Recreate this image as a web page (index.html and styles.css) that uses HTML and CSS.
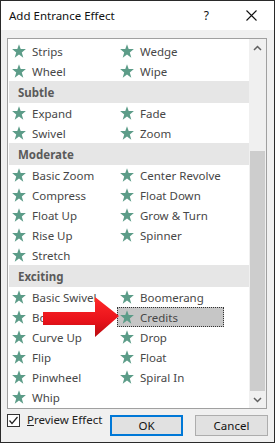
FILE: index.html
```html
<!DOCTYPE html>
<html>
<head>
<meta charset="utf-8">
<link rel="stylesheet" href="styles.css">
</head>
<body>
<div class="window">
  <div class="titlebar">
    <span class="title">Add Entrance Effect</span>
    <span class="help">?</span>
    <svg class="close" width="11" height="11" viewBox="0 0 11 11"><path d="M0.5 0.5L10.5 10.5M10.5 0.5L0.5 10.5" stroke="#111" stroke-width="1.1"/></svg>
  </div>
  <div class="body">
    <div class="listbox">
      <div class="list">
        <div class="grid">
          <div class="item"><svg class="star"><use href="#star"/></svg><span>Strips</span></div>
          <div class="item"><svg class="star"><use href="#star"/></svg><span>Wedge</span></div>
          <div class="item"><svg class="star"><use href="#star"/></svg><span>Wheel</span></div>
          <div class="item"><svg class="star"><use href="#star"/></svg><span>Wipe</span></div>
        </div>
        <div class="group">Subtle</div>
        <div class="grid">
          <div class="item"><svg class="star"><use href="#star"/></svg><span>Expand</span></div>
          <div class="item"><svg class="star"><use href="#star"/></svg><span>Fade</span></div>
          <div class="item"><svg class="star"><use href="#star"/></svg><span>Swivel</span></div>
          <div class="item"><svg class="star"><use href="#star"/></svg><span>Zoom</span></div>
        </div>
        <div class="group">Moderate</div>
        <div class="grid">
          <div class="item"><svg class="star"><use href="#star"/></svg><span>Basic Zoom</span></div>
          <div class="item"><svg class="star"><use href="#star"/></svg><span>Center Revolve</span></div>
          <div class="item"><svg class="star"><use href="#star"/></svg><span>Compress</span></div>
          <div class="item"><svg class="star"><use href="#star"/></svg><span>Float Down</span></div>
          <div class="item"><svg class="star"><use href="#star"/></svg><span>Float Up</span></div>
          <div class="item"><svg class="star"><use href="#star"/></svg><span>Grow &amp; Turn</span></div>
          <div class="item"><svg class="star"><use href="#star"/></svg><span>Rise Up</span></div>
          <div class="item"><svg class="star"><use href="#star"/></svg><span>Spinner</span></div>
          <div class="item"><svg class="star"><use href="#star"/></svg><span>Stretch</span></div>
        </div>
        <div class="group">Exciting</div>
        <div class="grid">
          <div class="item"><svg class="star"><use href="#star"/></svg><span>Basic Swivel</span></div>
          <div class="item"><svg class="star"><use href="#star"/></svg><span>Boomerang</span></div>
          <div class="item"><svg class="star"><use href="#star"/></svg><span>Bounce</span></div>
          <div class="item selected"><svg class="star"><use href="#star"/></svg><span>Credits</span></div>
          <div class="item"><svg class="star"><use href="#star"/></svg><span>Curve Up</span></div>
          <div class="item"><svg class="star"><use href="#star"/></svg><span>Drop</span></div>
          <div class="item"><svg class="star"><use href="#star"/></svg><span>Flip</span></div>
          <div class="item"><svg class="star"><use href="#star"/></svg><span>Float</span></div>
          <div class="item"><svg class="star"><use href="#star"/></svg><span>Pinwheel</span></div>
          <div class="item"><svg class="star"><use href="#star"/></svg><span>Spiral In</span></div>
          <div class="item"><svg class="star"><use href="#star"/></svg><span>Whip</span></div>
        </div>
      </div>
      <div class="scrollbar">
        <div class="sb-btn"><svg width="9" height="6" viewBox="0 0 9 6"><path d="M1 5L4.5 1.5L8 5" fill="none" stroke="#606060" stroke-width="1.5"/></svg></div>
        <div class="sb-track"><div class="sb-thumb"></div></div>
        <div class="sb-btn"><svg width="9" height="6" viewBox="0 0 9 6"><path d="M1 1L4.5 4.5L8 1" fill="none" stroke="#606060" stroke-width="1.5"/></svg></div>
      </div>
    </div>
    <div class="footer">
      <span class="checkbox"><svg width="11" height="11" viewBox="0 0 11 11"><path d="M1.5 5.5L4 8.5L9.5 2" fill="none" stroke="#222" stroke-width="1.2"/></svg></span>
      <span class="label"><u>P</u>review Effect</span>
      <div class="buttons">
        <button class="btn default">OK</button>
        <button class="btn">Cancel</button>
      </div>
    </div>
  </div>
  <svg class="arrow" width="80" height="44" viewBox="0 0 80 44">
    <defs>
      <linearGradient id="ag" x1="0" y1="0" x2="0" y2="1">
        <stop offset="0" stop-color="#ff2a2a"/>
        <stop offset="0.6" stop-color="#e8121a"/>
        <stop offset="1" stop-color="#b80c10"/>
      </linearGradient>
    </defs>
    <polygon points="0,15 52,15 52,0 76,19 52,40 52,28 0,28" fill="url(#ag)"/>
  </svg>
  <svg width="0" height="0" class="defs">
    <defs>
      <symbol id="star" viewBox="0 0 14 14">
        <polygon points="7,0.2 8.7,5.0 13.9,5.1 9.8,8.4 11.3,13.7 7,10.5 2.7,13.7 4.2,8.4 0.1,5.1 5.3,5.0" fill="#5c9c88"/>
      </symbol>
    </defs>
  </svg>
</div>
</body>
</html>
```

FILE: styles.css
```css
* { box-sizing: border-box; }
html, body { margin: 0; padding: 0; }
body {
  font-family: "Noto Sans", "Open Sans", sans-serif;
  font-size: 11.5px;
  color: #444;
  background: #fff;
}
.window {
  position: relative;
  width: 275px;
  height: 443px;
  border: 1px solid #2a2a2a;
  background: #f0f0f0;
  overflow: hidden;
}
.titlebar {
  height: 29px;
  background: #fff;
  display: flex;
  align-items: center;
  padding-left: 8px;
}
.title {
  color: #111;
  font-size: 11.5px;
  flex: 1;
}
.help {
  color: #111;
  font-size: 12px;
  margin-right: 37px;
}
.close {
  margin-right: 17px;
}
.body {
  padding-top: 8px;
}
.listbox {
  margin-left: 6px;
  width: 260px;
  height: 371px;
  border: 1px solid #a0a0a0;
  background: #fff;
  display: flex;
}
.list {
  width: 241px;
  height: 369px;
  overflow: hidden;
  padding-top: 2px;
}
.grid {
  display: grid;
  grid-template-columns: 108px 108px;
  padding-left: 1px;
}
.item {
  height: 20px;
  display: flex;
  align-items: center;
  gap: 6px;
  padding-left: 3px;
  white-space: nowrap;
  color: #474747;
}
.item.selected {
  width: 107px;
  background: #c6c6c6;
  outline: 1px dotted #333;
  outline-offset: -1px;
}
.star {
  width: 14px;
  height: 14px;
  flex: none;
}
.group {
  margin-left: 1px;
  height: 22px;
  background: #e6e6e6;
  display: flex;
  align-items: center;
  padding-left: 9px;
  font-weight: bold;
  color: #5a5a5a;
}
.scrollbar {
  width: 17px;
  height: 369px;
  background: #f0f0f0;
  display: flex;
  flex-direction: column;
}
.sb-btn {
  height: 17px;
  flex: none;
  display: flex;
  align-items: center;
  justify-content: center;
}
.sb-track {
  flex: 1;
  display: flex;
  flex-direction: column;
  justify-content: flex-end;
}
.sb-thumb {
  height: 240px;
  margin: 0 1px;
  background: #cdcdcd;
}
.footer {
  display: flex;
  align-items: flex-start;
  height: 33px;
  padding-left: 6px;
  padding-right: 6px;
}
.checkbox {
  margin-top: 5px;
  width: 13px;
  height: 13px;
  border: 1px solid #333;
  background: #fff;
  display: flex;
  align-items: center;
  justify-content: center;
}
.label {
  margin-left: 7px;
  margin-top: 3px;
  color: #222;
  white-space: nowrap;
}
.buttons {
  margin-left: auto;
  margin-top: 6px;
  display: flex;
  gap: 12px;
}
.btn {
  width: 73px;
  height: 21px;
  background: #e1e1e1;
  border: 1px solid #adadad;
  font-family: inherit;
  font-size: 11.5px;
  color: #111;
  padding: 0;
}
.btn.default {
  border: 2px solid #0078d7;
}
.arrow {
  position: absolute;
  left: 42px;
  top: 296px;
}
.defs {
  position: absolute;
}
```
